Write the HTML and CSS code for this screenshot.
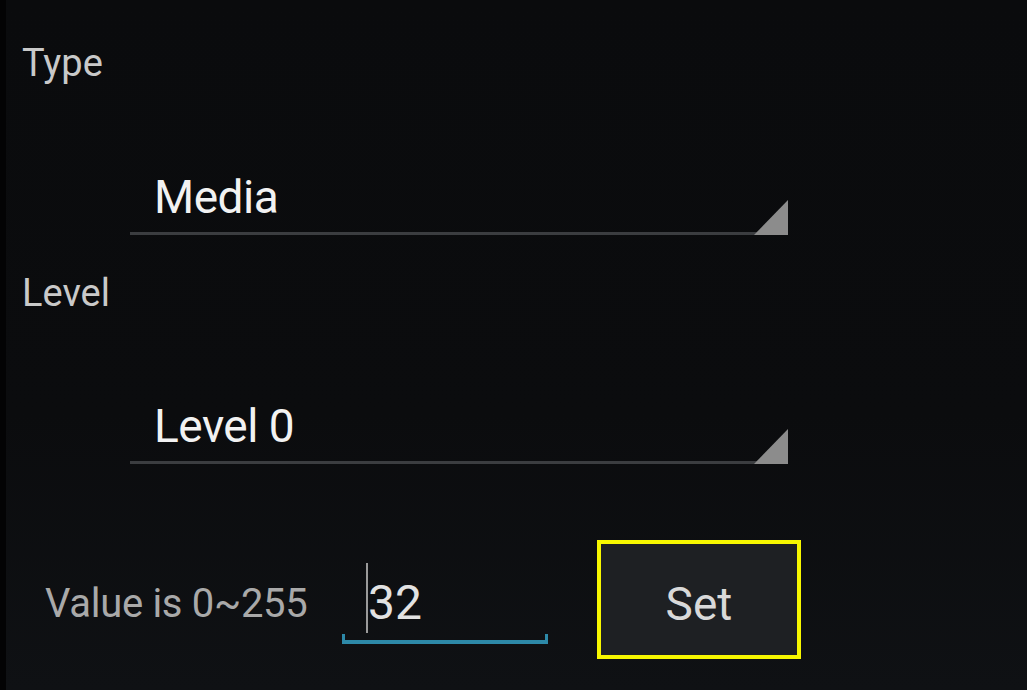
FILE: index.html
```html
<!DOCTYPE html>
<html lang="en">
<head>
<meta charset="utf-8">
<title>Volume Level</title>
<link rel="stylesheet" href="styles.css">
</head>
<body>
<div class="screen">
  <div class="label label-type">Type</div>
  <div class="spinner spinner-type"><span class="spinner-text">Media</span></div>
  <div class="label label-level">Level</div>
  <div class="spinner spinner-level"><span class="spinner-text">Level 0</span></div>
  <div class="value-row">
    <div class="value-label">Value is 0~255</div>
    <div class="field">
      <div class="field-input"><span class="cursor"></span><span class="field-text">32</span></div>
      <div class="field-line"></div>
    </div>
    <button class="set-button" type="button">Set</button>
  </div>
</div>
</body>
</html>
```

FILE: styles.css
```css
html, body {
  margin: 0;
  padding: 0;
  background: #0b0c0e;
}

.screen {
  box-sizing: border-box;
  width: 1027px;
  height: 690px;
  overflow: hidden;
  border-left: 6px solid #030304;
  background: linear-gradient(180deg, #0a0b0d 0%, #0b0c0e 60%, #0f1114 100%);
  font-family: Roboto, "Liberation Sans", sans-serif;
  padding-top: 44px;
  display: flex;
  flex-direction: column;
}

.label {
  font-size: 38px;
  line-height: 38px;
  color: #c9c9c9;
  padding-left: 16px;
}

.label-level {
  margin-top: 39px;
}

.spinner {
  position: relative;
  box-sizing: border-box;
  margin-left: 124px;
  width: 658px;
  padding-left: 24px;
  padding-bottom: 12px;
  border-bottom: 3px solid #3b3d40;
}

.spinner-type {
  margin-top: 92px;
}

.spinner-level {
  margin-top: 91px;
}

.spinner-text {
  display: block;
  font-size: 46px;
  line-height: 46px;
  letter-spacing: -0.5px;
  color: #f2f2f2;
}

.spinner::after {
  content: "";
  position: absolute;
  right: 0;
  bottom: -3px;
  width: 34px;
  height: 35px;
  background: #8c8c8c;
  clip-path: polygon(100% 0, 100% 100%, 0 100%);
}

.value-row {
  display: flex;
  align-items: flex-start;
  margin-top: 76px;
  padding-left: 39px;
}

.value-label {
  width: 297px;
  margin-top: 44px;
  font-size: 40px;
  line-height: 40px;
  letter-spacing: -0.3px;
  color: #a9a9a9;
}

.field {
  width: 206px;
  margin-top: 23px;
  display: flex;
  flex-direction: column;
}

.field-input {
  height: 71px;
  padding-left: 24px;
  display: flex;
  align-items: flex-start;
}

.cursor {
  width: 2px;
  height: 70px;
  background: #9a9a9a;
}

.field-text {
  margin-top: 16px;
  font-size: 48px;
  line-height: 48px;
  color: #e2e2e2;
}

.field-line {
  box-sizing: border-box;
  height: 10px;
  border-style: solid;
  border-color: #2d89a8;
  border-width: 0 3px 4px 3px;
}

.set-button {
  box-sizing: border-box;
  width: 204px;
  height: 119px;
  margin-left: 49px;
  border: 4px solid #f7f700;
  background: #1e2023;
  color: #d9d9d9;
  font-family: Roboto, "Liberation Sans", sans-serif;
  font-size: 46px;
  line-height: 46px;
  padding: 8px 0 0 0;
  text-align: center;
}
```
